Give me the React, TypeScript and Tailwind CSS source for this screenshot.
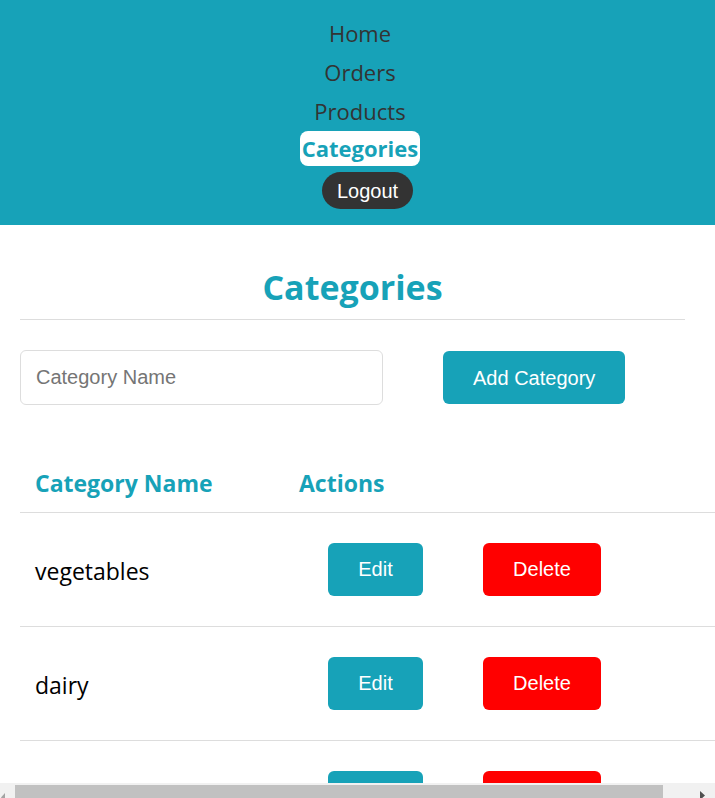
import { useState } from "react";

const categories = ["vegetables", "dairy", "fruits"];

function FakeScrollbar() {
  // the reference shows the window's horizontal scrollbar over the bottom edge
  return (
    <div className="fixed bottom-0 left-0 w-[715px] h-[15px] bg-[#f1f1f1]">
      <svg className="absolute left-[1px] top-[6px]" width="8" height="9" viewBox="0 0 8 9">
        <polygon points="4,0 4,9 0,4.5" fill="#a3a3a3" transform="translate(0,4)" />
      </svg>
      <div className="absolute left-[15px] top-[2px] w-[648px] h-[13px] bg-[#c1c1c1]" />
      <svg className="absolute left-[700px] top-[8px]" width="8" height="7" viewBox="0 0 8 7">
        <polygon points="0,0 5,4.5 0,9" fill="#505050" />
      </svg>
    </div>
  );
}

export default function App() {
  const [name, setName] = useState("");

  return (
    <div className="h-screen w-full overflow-hidden bg-white font-['Open_Sans',sans-serif]">
      <nav className="w-[715px] bg-[#17a2b8] pt-[14px] pb-[16px] pl-[5px] flex flex-col items-center">
        <a className="h-[39px] flex items-center text-[22px] text-[#333]">Home</a>
        <a className="h-[39px] flex items-center text-[22px] text-[#333]">Orders</a>
        <a className="h-[39px] flex items-center text-[22px] text-[#333]">Products</a>
        <a className="h-[35px] flex items-center px-[2px] bg-white rounded-lg text-[22px] font-bold text-[#17a2b8]">
          Categories
        </a>
        <button className="mt-[6px] ml-[15px] h-[37px] px-[15px] rounded-full bg-[#333] text-white text-[20px] font-['Liberation_Sans',Arial,sans-serif]">
          Logout
        </button>
      </nav>

      <main className="pl-5">
        <h2 className="w-[665px] mt-[42px] pb-[12px] border-b border-[#ddd] text-center text-[34px] leading-[40px] font-bold text-[#17a2b8]">
          Categories
        </h2>

        <div className="mt-[30px] flex items-center gap-[60px]">
          <input
            value={name}
            onChange={(e) => setName(e.target.value)}
            placeholder="Category Name"
            className="w-[363px] h-[55px] px-[15px] border border-[#ddd] rounded-md text-[20px] font-['Liberation_Sans',Arial,sans-serif] placeholder:text-[#757575] outline-none"
          />
          <button className="h-[53px] px-[30px] rounded-md bg-[#17a2b8] text-white text-[20px] font-['Liberation_Sans',Arial,sans-serif]">
            Add Category
          </button>
        </div>

        <table className="mt-[50px] w-[736px] border-collapse">
          <thead>
            <tr className="border-b border-[#ddd]">
              <th className="w-[264px] h-[57px] pl-[15px] text-left text-[23px] font-bold text-[#17a2b8]">
                Category Name
              </th>
              <th className="h-[57px] pl-[15px] text-left text-[23px] font-bold text-[#17a2b8]">
                Actions
              </th>
            </tr>
          </thead>
          <tbody>
            {categories.map((c) => (
              <tr key={c} className="border-b border-[#ddd]">
                <td className="h-[114px] pl-[15px] pt-[5px] text-[23px] text-black">{c}</td>
                <td className="h-[114px] pl-[44px]">
                  <div className="flex gap-[60px] font-['Liberation_Sans',Arial,sans-serif] text-[20px] text-white">
                    <button className="h-[53px] w-[95px] rounded-md bg-[#17a2b8]">Edit</button>
                    <button className="h-[53px] w-[118px] rounded-md bg-[#ff0000]">Delete</button>
                  </div>
                </td>
              </tr>
            ))}
          </tbody>
        </table>
      </main>

      <FakeScrollbar />
    </div>
  );
}
